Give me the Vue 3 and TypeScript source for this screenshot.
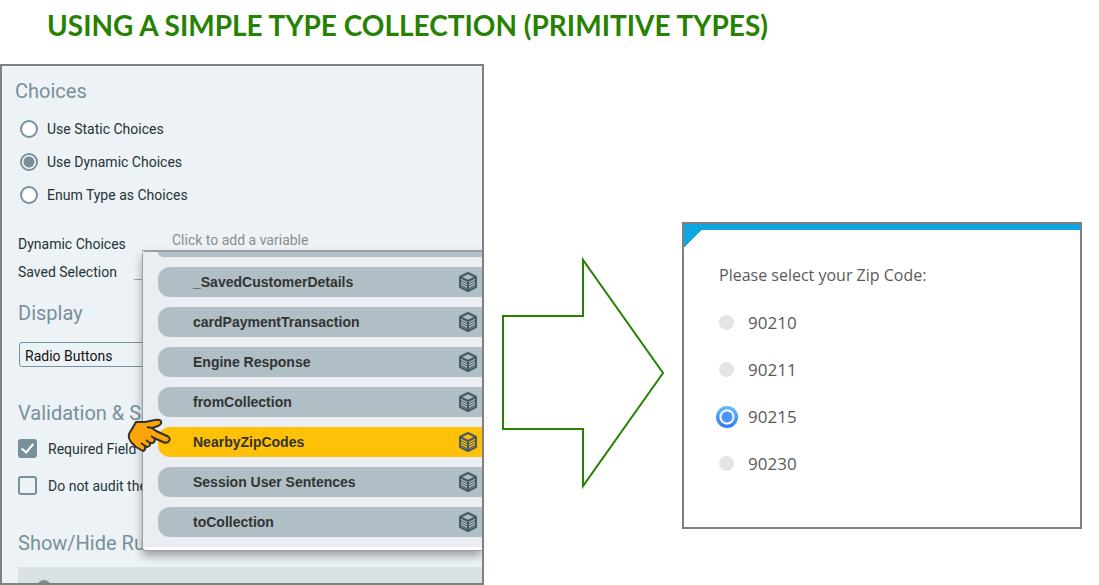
<script setup lang="ts">
import { ref } from 'vue'

const source = ref('dynamic')
const sources = [
  { id: 'static', label: 'Use Static Choices' },
  { id: 'dynamic', label: 'Use Dynamic Choices' },
  { id: 'enum', label: 'Enum Type as Choices' },
]
const variables = [
  '_SavedCustomerDetails',
  'cardPaymentTransaction',
  'Engine Response',
  'fromCollection',
  'NearbyZipCodes',
  'Session User Sentences',
  'toCollection',
]
const active = ref('NearbyZipCodes')
const display = ref('Radio Buttons')
const required = ref(true)
const noAudit = ref(false)
const zip = ref('90215')
const zips = ['90210', '90211', '90215', '90230']
</script>

<template>
  <div class="page">
    <h1 class="title">USING A SIMPLE TYPE COLLECTION (PRIMITIVE TYPES)</h1>
    <main class="stage">
      <section class="panel">
        <h2 class="heading first">Choices</h2>
        <div class="sources">
          <label v-for="s in sources" :key="s.id" class="option">
            <input v-model="source" class="radio" type="radio" name="source" :value="s.id" />
            {{ s.label }}
          </label>
        </div>

        <div class="field dynamic">
          <label for="variable">Dynamic Choices</label>
          <div class="picker">
            <input id="variable" class="line variable" type="text" placeholder="Click to add a variable" />
            <div class="menu">
              <div class="list">
                <div class="pill rest"></div>
                <button
                  v-for="v in variables"
                  :key="v"
                  type="button"
                  class="pill"
                  :class="{ active: v === active }"
                  @click="active = v"
                >
                  <span>{{ v }}</span>
                  <svg class="cube" viewBox="0 0 20 20" aria-hidden="true">
                    <path d="M10 1 18 5v10l-8 4-8-4V5zM2 5l8 4 8-4M10 9v10" />
                    <path class="thin" d="M2 8l8 4 8-4M2 10.500l8 4 8-4M2 13l8 4 8-4" />
                  </svg>
                </button>
              </div>
            </div>
            <svg class="hand" viewBox="0 0 46 36" aria-hidden="true">
              <path
                d="M9 4 18 4 28 2Q34 1 34 4Q35 6 31 8L25 10 29 13 40 18Q44 20 42 23Q40 26 36 24L27 20Q29 23 26 25L23 25Q24 28 20 29L18 28Q19 32 16 33L9 29 4 24Q1 20 2 16Z"
              />
              <path class="fold" d="M25 10 20 9M27 20 24 18M23 25 19 22M18 28 14 25" />
            </svg>
          </div>
        </div>
        <div class="field saved">
          <label for="saved">Saved Selection</label>
          <input id="saved" class="line" type="text" />
        </div>

        <h2 class="heading display"><label for="display">Display</label></h2>
        <select id="display" v-model="display" class="select">
          <option>Radio Buttons</option>
        </select>

        <h2 class="heading validation">Validation &amp; Security</h2>
        <div class="checks">
          <label class="check"><input v-model="required" type="checkbox" />Required Field</label>
          <label class="check"><input v-model="noAudit" type="checkbox" />Do not audit the value</label>
        </div>
        <h2 class="heading rules">Show/Hide Rules</h2>
        <div class="bar"><span class="dot"></span></div>
      </section>

      <svg class="arrow" viewBox="0 0 162 232" aria-hidden="true">
        <path d="M1 59H81V3L161 116 81 229V172H1Z" />
      </svg>

      <section class="card">
        <fieldset class="question">
          <legend>Please select your Zip Code:</legend>
          <label v-for="z in zips" :key="z" class="zip">
            <input v-model="zip" type="radio" name="zip" :value="z" />
            {{ z }}
          </label>
        </fieldset>
      </section>
    </main>
  </div>
</template>

<style>
body {
  margin: 0;
  background: #fff;
}
</style>

<style scoped>
* {
  box-sizing: border-box;
}
.page {
  display: flex;
  flex-direction: column;
  min-height: 100vh;
  font-family: Roboto, "Liberation Sans", sans-serif;
  font-size: 14px;
  color: #263238;
}
.title {
  margin: 0;
  padding: 5px 47px 19px;
  font: 700 28px/40px Lato, "Open Sans", sans-serif;
  color: #278203;
  white-space: nowrap;
}
.stage {
  flex: 1;
  display: grid;
  grid-template-columns: minmax(0, 484fr) 162px minmax(0, 400fr);
  column-gap: 18px;
  padding-right: 17px;
  align-items: start;
}
.panel {
  align-self: stretch;
  display: flex;
  flex-direction: column;
  overflow: hidden;
  border: 2px solid #808080;
  background: #ecf2f5;
}
.heading {
  margin: 0 16px;
  font-size: 20px;
  font-weight: 400;
  line-height: 24px;
  color: #78909c;
  white-space: nowrap;
}
.first {
  margin: 13px 13px 9px;
}
.sources {
  display: flex;
  flex-direction: column;
  padding-left: 18px;
}
.option {
  display: flex;
  align-items: center;
  gap: 9px;
  height: 33px;
}
input[type="radio"],
input[type="checkbox"] {
  appearance: none;
  flex: none;
  margin: 0;
}
.radio {
  width: 18px;
  height: 18px;
  border: 2px solid #78909c;
  border-radius: 50%;
  background: #fff;
}
.radio:checked {
  background: radial-gradient(circle, #78909c 5px, #fff 6px);
}
.field {
  display: flex;
  align-items: center;
  height: 28px;
  padding-left: 16px;
}
.field > label {
  width: 116px;
}
.dynamic {
  margin-top: 19px;
}
.dynamic > label {
  width: 124px;
}
.picker {
  position: relative;
  flex: 1;
  align-self: flex-start;
}
.line {
  width: 100%;
  padding: 0;
  border: 0;
  border-bottom: 1px solid #a0a5a8;
  outline: 0;
  background: transparent;
  font: inherit;
  flex: 1;
}
.variable {
  display: block;
  height: 21px;
  padding: 0 0 0 30px;
}
.variable::placeholder {
  color: #8a8d8f;
  opacity: 1;
}
.saved .line {
  height: 16px;
}
.menu {
  position: absolute;
  z-index: 1;
  top: 100%;
  left: 0;
  right: 0;
  padding-bottom: 3px;
  border: solid #9a9fa2;
  border-width: 1px 0 1px 1px;
  border-radius: 4px 0 0 4px;
  background: #fff;
  box-shadow: 0 5px 10px rgba(0, 0, 0, 0.35);
}
.list {
  display: flex;
  flex-direction: column;
  gap: 10px;
  padding: 0 0 10px 15px;
  background: #eaeef2;
}
.pill {
  display: flex;
  align-items: center;
  justify-content: space-between;
  height: 30px;
  padding: 0 4px 0 35px;
  border: 0;
  border-radius: 12px 0 0 12px;
  background: #b0bec5;
  color: #333;
  font: 700 14px/20px "Liberation Sans", Arial, sans-serif;
}
.rest {
  height: 5px;
  border-radius: 0 0 0 12px;
}
.active {
  background: #ffc107;
}
.cube {
  width: 20px;
  height: 20px;
  fill: none;
  stroke: #455a64;
  stroke-width: 2;
  stroke-linejoin: round;
}
.cube .thin {
  stroke-width: 1;
}
.hand {
  position: absolute;
  z-index: 2;
  left: -15px;
  top: 188px;
  width: 46px;
  height: 36px;
  fill: #ffa50a;
  stroke: #33302a;
  stroke-width: 2;
  stroke-linejoin: round;
}
.hand .fold {
  fill: none;
}
.display {
  margin-top: 15px;
}
.select {
  appearance: none;
  height: 25px;
  margin: 17px 16px 0 17px;
  padding: 2px 5px 0;
  border: 1px solid #78909c;
  border-radius: 3px;
  background: #ecf2f5;
  color: #111;
  font: inherit;
}
.validation {
  margin-top: 34px;
}
.checks {
  display: flex;
  flex-direction: column;
  padding: 5px 16px 0;
}
.check {
  display: flex;
  align-items: center;
  gap: 11px;
  height: 37px;
}
.check input {
  display: grid;
  place-items: center;
  width: 19px;
  height: 19px;
  border: 2px solid #78909c;
  border-radius: 3px;
}
.check input:checked {
  background: #78909c;
}
.check input:checked::after {
  content: "";
  width: 5px;
  height: 10px;
  margin-bottom: 3px;
  border: solid #fff;
  border-width: 0 2px 2px 0;
  transform: rotate(40deg);
}
.rules {
  margin-top: 27px;
}
.bar {
  flex: 1 1 16px;
  height: 16px;
  margin: 12px 0 0 16px;
  padding: 13px 0 0 19px;
  overflow: hidden;
  background: #dae1e4;
}
.dot {
  display: block;
  width: 14px;
  height: 14px;
  border-radius: 50%;
  background: #78909c;
}
.arrow {
  width: 162px;
  height: 232px;
  margin-top: 193px;
  overflow: visible;
  fill: none;
  stroke: #278203;
  stroke-width: 2;
}
.card {
  margin-top: 158px;
  padding: 34px 35px 40px;
  border: 2px solid #808080;
  background:
    linear-gradient(135deg, #0ea5e1 50%, transparent 50%) 0 0 / 24px 24px no-repeat,
    linear-gradient(#0ea5e1, #0ea5e1) 0 0 / 100% 6px no-repeat,
    #fff;
  color: #5a5a5a;
  font: 16px/34px "Open Sans", "Noto Sans", sans-serif;
}
.question {
  margin: 0;
  padding: 0;
  border: 0;
  min-width: 0;
}
.question legend {
  padding: 0 0 7px;
}
.zip {
  display: grid;
  grid-template-columns: 15px 1fr;
  align-items: center;
  gap: 14px;
  height: 47px;
  font-size: 17px;
}
.zip input {
  justify-self: center;
  width: 15px;
  height: 15px;
  border-radius: 50%;
  background: #e4e4e4;
}
.zip input:checked {
  width: 22px;
  height: 22px;
  background:
    radial-gradient(circle, #4c94fb 5px, #fff 6px, #fff 7px, transparent 8px),
    linear-gradient(#64bcfc, #3378f6);
}
</style>
